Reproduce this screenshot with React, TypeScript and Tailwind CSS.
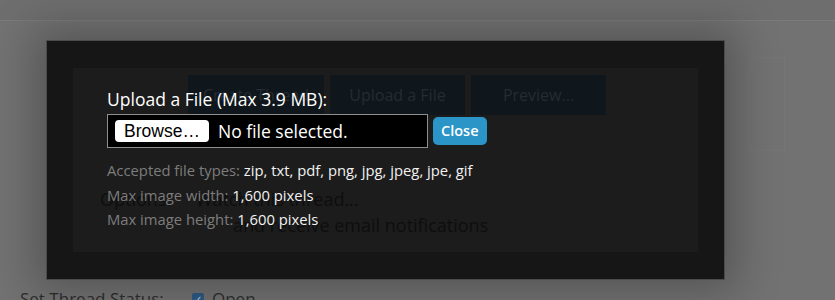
const sans = "font-['Open_Sans','Noto_Sans',sans-serif]";

function BackgroundPage() {
  return (
    <div className="flex h-full flex-col">
      <div className="h-[21px] border-b border-[#7b7b7b] bg-[#6e6e6e]" />
      <div className="flex flex-1 justify-end pr-[50px] pt-[36px]">
        <div className="h-[94px] w-[36px] border border-[#757575]" />
      </div>
      <div className={`flex h-[20px] translate-y-[9px] items-center pl-[20px] ${sans} text-[17px] text-[#2e2e2e]`}>
        <span className="w-[172px]">Set Thread Status:</span>
        <span className="flex items-center gap-[8px]">
          <span className="flex h-[12px] w-[12px] items-center justify-center rounded-[2px] bg-[#2d5a86] text-[10px] leading-none text-[#cfd8e3]">✓</span>
          Open
        </span>
      </div>
    </div>
  );
}

function Modal() {
  return (
    <div className="absolute left-[46px] top-[40px] h-[240px] w-[679px] border border-[#4a4a4a] bg-[#161616] px-[26px] py-[27px] shadow-[0_0_40px_12px_rgba(0,0,0,0.25)]">
      <div className="relative h-full w-full bg-[#1c1c1c]">
        {/* faint page content showing through */}
        <div className={`flex gap-[6px] pl-[115px] pt-[7px] ${sans} text-[16px] text-[#262c31]`}>
          <div className="flex h-[40px] w-[136px] items-center justify-center bg-[#0f171c]">Create Thread</div>
          <div className="flex h-[40px] w-[135px] items-center justify-center bg-[#0f171c]">Upload a File</div>
          <div className="flex h-[40px] w-[135px] items-center justify-center bg-[#0f171c]">Preview...</div>
        </div>
        <div className={`absolute left-[27px] top-[118px] ${sans} text-[18px] leading-[26px] text-[#0e0e0e]`}>
          <div>
            Options: <span className="pl-[20px]">Watch this thread...</span>
          </div>
          <div className="pl-[133px]">and receive email notifications</div>
        </div>

        {/* upload form */}
        <div className={`absolute left-[34px] top-[19px] ${sans}`}>
          <div className="text-[17.5px] leading-[25px] text-white">Upload a File (Max 3.9 MB):</div>
          <div className="mt-[2px] flex items-center gap-[5px]">
            <div className="flex h-[34px] w-[321px] items-center gap-[9px] border border-[#8f8f8f] bg-black px-[7px]">
              <button
                type="button"
                className="flex h-[22px] w-[94px] items-center justify-center rounded-[4px] bg-white font-['Liberation_Sans',Arial,sans-serif] text-[17.5px] text-black"
              >
                Browse…
              </button>
              <span className="text-[17.5px] text-white">No file selected.</span>
            </div>
            <button
              type="button"
              className="h-[28px] rounded-[5px] bg-[#2a95c6] px-[8px] text-[14.5px] font-semibold text-white"
            >
              Close
            </button>
          </div>
          <div className="mt-[10px] text-[14.8px] leading-[24.5px]">
            <div>
              <span className="text-[#7c7c7c]">Accepted file types: </span>
              <span className="text-[#f2f2f2]">zip, txt, pdf, png, jpg, jpeg, jpe, gif</span>
            </div>
            <div>
              <span className="text-[#7c7c7c]">Max image width: </span>
              <span className="text-[#f2f2f2]">1,600 pixels</span>
            </div>
            <div>
              <span className="text-[#7c7c7c]">Max image height: </span>
              <span className="text-[#f2f2f2]">1,600 pixels</span>
            </div>
          </div>
        </div>
      </div>
    </div>
  );
}

export default function App() {
  return (
    <div className="relative h-[300px] w-[835px] overflow-hidden bg-[#727272]">
      <BackgroundPage />
      <Modal />
    </div>
  );
}
